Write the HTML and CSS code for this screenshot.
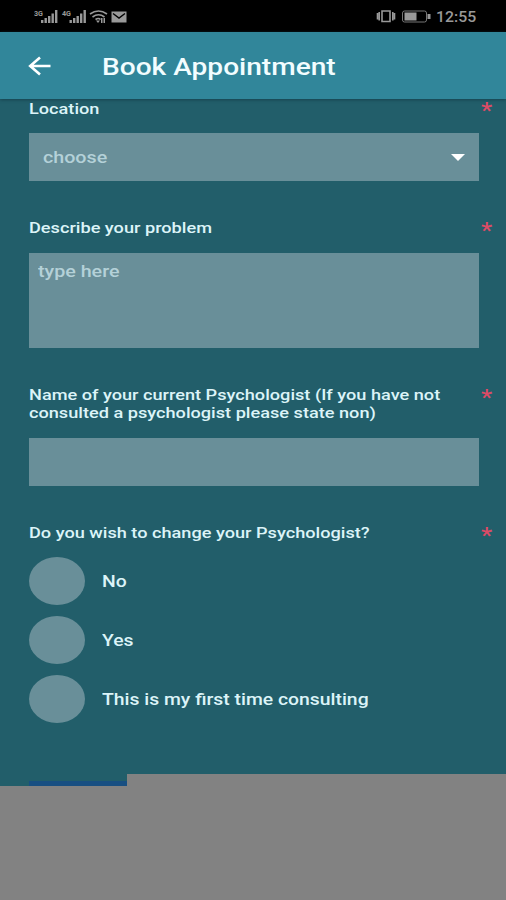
FILE: index.html
```
<!DOCTYPE html>
<html lang="en">
<head>
  <title>Book Appointment</title>
  <meta charset="utf-8">
  <meta name="viewport" content="width=device-width, initial-scale=1.0">
  <link rel="stylesheet" href="styles.css">
</head>
<body>
  <div class="status-bar">
    <svg class="status-left" width="96" height="18" viewBox="0 0 96 18">
      <g class="network"><text x="0" y="8" textLength="9" lengthAdjust="spacingAndGlyphs">3G</text><text x="28" y="8" textLength="9" lengthAdjust="spacingAndGlyphs">4G</text></g>
      <path d="M7 12h2.400v3h-2.400zM10.500 10h2.400v5h-2.400zM14 8h2.400v7h-2.400zM17.500 5.500h2.400v9.500h-2.400zM21 2h2.400v13h-2.400zM35.500 12h2.400v3h-2.400zM39 10h2.400v5h-2.400zM42.500 8h2.400v7h-2.400zM46 5.500h2.400v9.500h-2.400zM49.500 2h2.400v13h-2.400z"/>
      <path class="line" d="M56 6q8.500-6 17 0M58.500 9q6-4.500 12 0M61.500 11.500q3-2 5 0"/>
      <path d="M62 12.500h4l-2 2.500zM67 10h1.500v5h-1.500zM69.500 10h1.500v5h-1.500z"/>
      <path d="M77.500 3.500h15v11h-15z"/>
      <path class="flap" d="M79 5.500l6 4.500 6-4.500"/>
    </svg>
    <div class="status-right">
      <svg width="56" height="16" viewBox="0 0 56 16">
        <path class="line" d="M6 3h8v10.500h-8zM3.200 4v8.500M1.500 5v6.500M16.800 4v8.500M18.500 5v6.500"/>
        <rect class="thin" x="26.500" y="3" width="24" height="11" rx="2"/>
        <path d="M28.500 4.500h12v8h-12zM51.500 6h3v5h-3z"/>
      </svg>
      <span class="clock">12:55</span>
    </div>
  </div>

  <div class="header">
    <svg width="24" height="20" viewBox="0 0 24 20"><path d="M22.500 10h-20M12 1.500l-9.800 8.500 9.800 8.500"/></svg>
    <h1>Book Appointment</h1>
  </div>

  <form class="form">
    <div class="label first"><span class="text">Location</span><span class="required">*</span></div>
    <div class="field select"><span class="text">choose</span><i class="caret"></i></div>

    <div class="label"><span class="text">Describe your problem</span><span class="required">*</span></div>
    <div class="field area"><span class="text">type here</span></div>

    <div class="label"><span class="text">Name of your current Psychologist (If you have not<br>consulted a psychologist please state non)</span><span class="required">*</span></div>
    <div class="field"></div>

    <div class="label"><span class="text">Do you wish to change your Psychologist?</span><span class="required">*</span></div>
    <div class="options">
      <div class="option"><i class="radio"></i><span class="text">No</span></div>
      <div class="option"><i class="radio"></i><span class="text">Yes</span></div>
      <div class="option"><i class="radio"></i><span class="text">This is my first time consulting</span></div>
    </div>
  </form>

  <div class="bottom">
    <div class="bottom-left"><div class="submit"></div></div>
  </div>
</body>
</html>
```
FILE: styles.css
```
* { box-sizing: border-box; }
body { margin: 0; height: 900px; overflow: hidden; display: flex; flex-direction: column; background: #225e6a; color: #dcf4f8; font-family: Roboto, sans-serif; font-weight: 500; }

.status-bar { height: 32px; flex: none; background: #000; color: #999; display: flex; justify-content: space-between; padding: 8px 30px 0 34px; }
.status-bar svg { fill: #999; flex: none; }
.status-bar .line { fill: none; stroke: #999; stroke-width: 1.6; }
.status-bar .thin { fill: none; stroke: #777; stroke-width: 1; }
.status-bar .flap { fill: none; stroke: #000; stroke-width: 1.4; }
.network { font-size: 7px; font-weight: 700; }
.status-right { display: flex; width: 100px; gap: 4px; }
.clock { font-size: 14px; line-height: 18px; transform: scaleX(1.13); transform-origin: left; }

.header { height: 67px; flex: none; background: #31869a; display: flex; align-items: center; padding-left: 28px; box-shadow: 0 1px 3px #17434f; }
.header svg { fill: none; stroke: #fff; stroke-width: 2.6; flex: none; }
h1 { margin: 2px 0 0 50px; color: #f2fdff; font-size: 24px; font-weight: 500; line-height: 30px; white-space: nowrap; transform: scaleX(1.17); transform-origin: left; }

.form { padding: 1px 27px 0 29px; }
.text { display: inline-block; white-space: nowrap; transform: scaleX(1.21); transform-origin: left; }
.label { display: flex; justify-content: space-between; font-size: 15px; line-height: 17.500px; padding-bottom: 16px; margin-right: -14px; }
.label.first { padding: 1px 0 14px; }
.required { width: 12px; height: 17px; color: #dc4b66; font-size: 22px; line-height: 22px; transform: scaleX(1.15); transform-origin: left; }
.first .required { line-height: 20px; }
.field { height: 48px; background: #698f99; margin-bottom: 39px; }
.field .text { font-weight: 500; transform: scaleX(1.23); }
.select { display: flex; align-items: center; justify-content: space-between; padding: 1px 14px 0; color: #b4d1d8; font-size: 16px; }
.caret { border: 7px solid transparent; border-top-color: #fff; border-bottom: 0; }
.area { height: 95px; padding: 10px 9px; color: #b4d1d8; font-size: 16px; line-height: 18px; }

.options { display: flex; flex-direction: column; gap: 11px; margin-top: -2px; }
.option { display: flex; align-items: center; gap: 17px; font-size: 16px; }
.option .text { padding-top: 2px; }
.radio { width: 56px; height: 48px; border-radius: 50%; background: #698f99; }

.bottom { height: 126px; flex: none; margin-top: auto; background: #828282; }
.bottom-left { width: 127px; height: 12px; padding: 7px 0 0 29px; background: #225e6a; }
.submit { height: 5px; background: #184f82; }
```
